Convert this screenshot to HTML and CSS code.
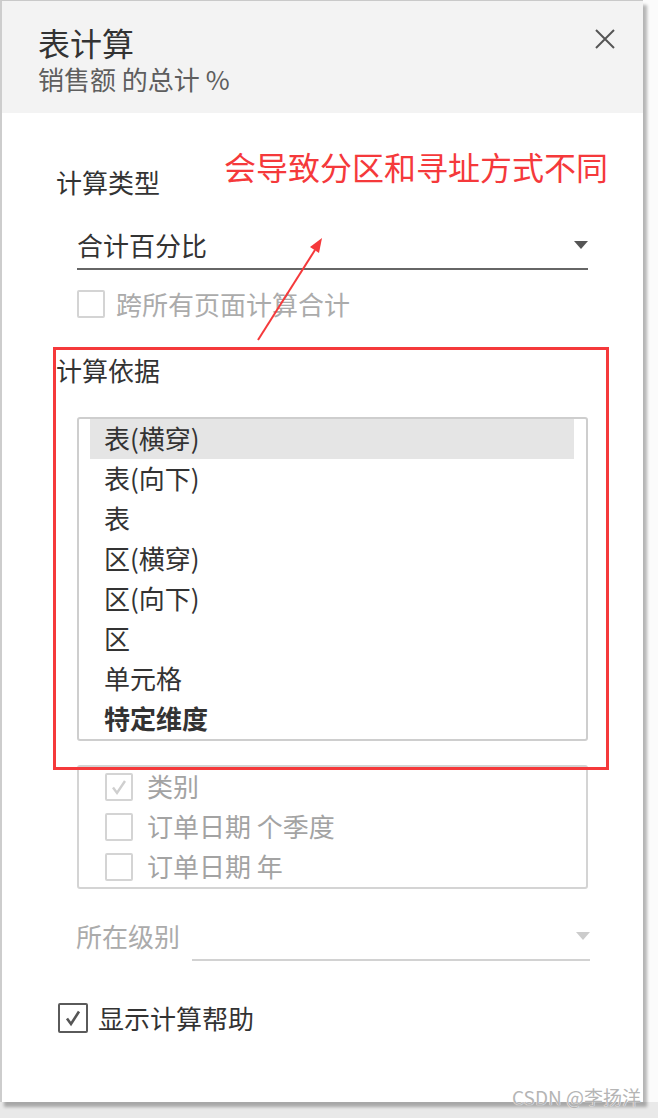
FILE: index.html
```html
<!DOCTYPE html>
<html lang="zh-CN">
<head>
<meta charset="utf-8">
<title>表计算</title>
<link rel="stylesheet" href="styles.css">
</head>
<body>
<div class="page">
  <div class="panel">
    <header class="head">
      <div class="head-text">
        <div class="title">表计算</div>
        <div class="subtitle">销售额 的总计 %</div>
      </div>
      <button class="close" aria-label="关闭">
        <svg width="20" height="20" viewBox="0 0 20 20"><path d="M1 1 L19 19 M19 1 L1 19" stroke="#555" stroke-width="2" fill="none"/></svg>
      </button>
    </header>
    <main class="body">
      <div class="label">计算类型</div>
      <div class="select">
        <span>合计百分比</span><span class="caret"></span>
      </div>
      <div class="check disabled"><span class="box"></span><span>跨所有页面计算合计</span></div>

      <div class="label label-gap">计算依据</div>
      <ul class="list">
        <li class="active">表(横穿)</li>
        <li>表(向下)</li>
        <li>表</li>
        <li>区(横穿)</li>
        <li>区(向下)</li>
        <li>区</li>
        <li>单元格</li>
        <li class="bold">特定维度</li>
      </ul>

      <div class="dims">
        <div class="dim"><span class="box"><svg width="24" height="24" viewBox="0 0 24 24"><path d="M6 12.5 L10 18 L18 6" stroke="#cfcfcf" stroke-width="2.4" fill="none"/></svg></span><span class="dim-text">类别</span></div>
        <div class="dim"><span class="box"></span><span class="dim-text">订单日期 个季度</span></div>
        <div class="dim"><span class="box"></span><span class="dim-text">订单日期 年</span></div>
      </div>

      <div class="level">
        <span class="level-label">所在级别</span>
        <div class="level-field"><span class="caret caret-light"></span></div>
      </div>

      <div class="help">
        <span class="box box-dark"><svg width="26" height="26" viewBox="0 0 26 26"><path d="M7 13.5 L11 19 L19 6.5" stroke="#555" stroke-width="2.6" fill="none"/></svg></span>
        <span>显示计算帮助</span>
      </div>
    </main>

    <div class="note">会导致分区和寻址方式不同</div>
    <div class="mark-box"></div>
    <svg class="arrow" width="658" height="1118" viewBox="0 0 658 1118">
      <line x1="258" y1="340" x2="315" y2="250" stroke="#f5393b" stroke-width="2"/>
      <polygon points="322,238 319,253 310,247" fill="#f5393b"/>
    </svg>
  </div>
  <div class="floor"></div>
  <div class="watermark">CSDN @李扬洋</div>
</div>
</body>
</html>
```

FILE: styles.css
```css
* { box-sizing: border-box; }
html, body { margin: 0; padding: 0; }
body {
  width: 658px;
  height: 1118px;
  overflow: hidden;
  background: #fbfbfb;
  font-family: "Noto Sans CJK SC", "Noto Sans", sans-serif;
  color: #333;
}
.page {
  position: relative;
  height: 1118px;
  display: flex;
  flex-direction: column;
}
.panel {
  position: relative;
  z-index: 1;
  flex: none;
  width: 643px;
  height: 1102px;
  background: #fff;
  border-left: 2px solid #cdcdcd;
  border-top: 1px solid #c9c9c9;
  box-shadow: 4px 5px 3px rgba(0, 0, 0, 0.28);
}
.floor {
  flex: 1;
  background: #e9e9e9;
}

/* header */
.head {
  height: 112px;
  background: #f3f3f3;
  display: flex;
  justify-content: space-between;
  align-items: flex-start;
  padding: 21px 28px 0 36px;
}
.title { font-size: 32px; line-height: 40px; color: #333; }
.subtitle { font-size: 26px; line-height: 34px; color: #5e5e5e; }
.close {
  margin-top: 7px;
  width: 20px;
  height: 20px;
  padding: 0;
  border: 0;
  background: none;
  display: block;
}
.close svg { display: block; }

/* body */
.body { padding: 52px 55px 0 54px; }
.label { font-size: 26px; line-height: 34px; color: #333; }
.label-gap { margin-top: 32px; }

.select {
  margin: 29px 0 0 21px;
  display: flex;
  align-items: center;
  justify-content: space-between;
  padding-bottom: 6px;
  border-bottom: 2px solid #666;
  font-size: 26px;
  line-height: 34px;
  color: #333;
}
.caret {
  width: 0;
  height: 0;
  border-left: 7px solid transparent;
  border-right: 7px solid transparent;
  border-top: 8px solid #555;
}
.caret-light { border-top-color: #cccccc; }

.check {
  margin: 17px 0 0 21px;
  display: flex;
  align-items: center;
  gap: 11px;
  font-size: 26px;
  line-height: 34px;
}
.disabled { color: #ababab; }
.box {
  width: 28px;
  height: 28px;
  border: 2px solid #d4d4d4;
  border-radius: 2px;
  flex: none;
  display: flex;
  align-items: center;
  justify-content: center;
}
.box svg { display: block; }

.list {
  list-style: none;
  margin: 30px 0 0 21px;
  padding: 0 12px 0 11px;
  border: 2px solid #cecece;
  border-radius: 3px;
}
.list li {
  height: 40px;
  line-height: 38px;
  padding-left: 14px;
  font-size: 26px;
  color: #333;
}
.list li.active { background: #e5e5e5; }
.list li.bold { font-weight: 700; }

.dims {
  margin: 24px 0 0 21px;
  padding-left: 26px;
  border: 2px solid #d4d4d4;
  border-radius: 3px;
}
.dim {
  height: 40px;
  display: flex;
  align-items: center;
  gap: 14px;
  font-size: 26px;
  color: #a3a3a3;
}
.dim-text { line-height: 34px; padding-bottom: 3px; }

.level {
  margin: 30px 0 0 20px;
  display: flex;
  font-size: 26px;
  line-height: 34px;
  color: #ababab;
}
.level-field {
  flex: 1;
  margin-left: 12px;
  height: 42px;
  border-bottom: 2px solid #d2d2d2;
  display: flex;
  justify-content: flex-end;
  align-items: flex-start;
  padding-top: 13px;
  margin-right: -2px;
}

.help {
  margin: 40px 0 0 2px;
  display: flex;
  align-items: center;
  gap: 10px;
  font-size: 26px;
  line-height: 34px;
  color: #333;
}
.box-dark {
  width: 30px;
  height: 30px;
  border-color: #5a5a5a;
}

/* annotations */
.note {
  position: absolute;
  left: 222px;
  top: 145px;
  font-size: 32px;
  line-height: 40px;
  color: #f5393b;
  white-space: nowrap;
}
.mark-box {
  position: absolute;
  left: 51px;
  top: 346px;
  width: 556px;
  height: 423px;
  border: 3px solid #f5393b;
}
.arrow {
  position: absolute;
  left: -2px;
  top: -1px;
  pointer-events: none;
}
.watermark {
  position: absolute;
  z-index: 2;
  left: 512px;
  top: 1084px;
  font-size: 19px;
  line-height: 26px;
  color: #b5b5b5;
  text-shadow: 0 0 1px #fff, 0 0 1px #fff;
  white-space: nowrap;
}
```
